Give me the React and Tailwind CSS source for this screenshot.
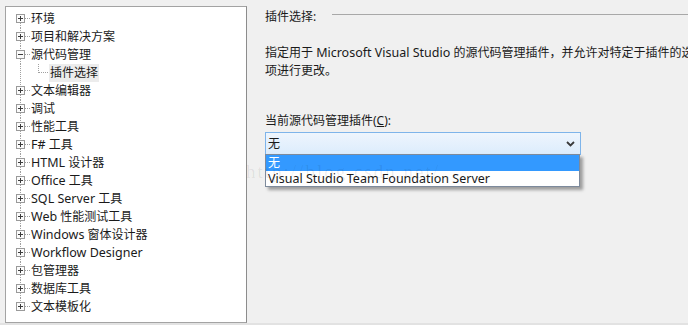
import React from "react";

const FONT = { fontFamily: '"Noto Sans", "Noto Sans CJK SC", sans-serif' };

function L({ children }) {
  return <span className="text-[12.5px]">{children}</span>;
}

function Connector({ kind, first, last, child }) {
  const dot = { stroke: "#a0a0a0", strokeDasharray: "1 1", strokeWidth: 1 };
  if (child) {
    return (
      <svg width="42" height="18" className="shrink-0" shapeRendering="crispEdges">
        <line x1="14.5" y1="0" x2="14.5" y2="18" style={dot} />
        <line x1="32.5" y1="0" x2="32.5" y2="9" style={dot} />
        <line x1="33" y1="8.5" x2="42" y2="8.5" style={dot} />
      </svg>
    );
  }
  return (
    <svg width="24" height="18" className="shrink-0" shapeRendering="crispEdges">
      {!first && <line x1="14.5" y1="0" x2="14.5" y2="4" style={dot} />}
      {!last && <line x1="14.5" y1="13" x2="14.5" y2="18" style={dot} />}
      <line x1="19" y1="8.5" x2="24" y2="8.5" style={dot} />
      <rect x="10.5" y="4.5" width="8" height="8" fill="#fbfbfb" stroke="#9a9a9a" />
      <line x1="12" y1="8.5" x2="17" y2="8.5" stroke="#3c3c3c" />
      {kind === "plus" && <line x1="14.5" y1="6" x2="14.5" y2="11" stroke="#3c3c3c" />}
    </svg>
  );
}

const items = [
  { t: "环境" },
  { t: "项目和解决方案" },
  { t: "源代码管理", open: true },
  { t: "插件选择", child: true },
  { t: "文本编辑器" },
  { t: "调试" },
  { t: "性能工具" },
  { t: <><L>F#</L> 工具</> },
  { t: <><L>HTML</L> 设计器</> },
  { t: <><L>Office</L> 工具</> },
  { t: <><L>SQL Server</L> 工具</> },
  { t: <><L>Web</L> 性能测试工具</> },
  { t: <><L>Windows</L> 窗体设计器</> },
  { t: <L>Workflow Designer</L> },
  { t: "包管理器" },
  { t: "数据库工具" },
  { t: "文本模板化" },
];

export default function App() {
  return (
    <div
      className="relative w-[688px] h-[325px] overflow-hidden bg-[#f0f0f0] text-[12px] text-[#1a1a1a] flex border-b-[2px] border-[#e2e2e2]"
      style={FONT}
    >
      {/* Tree panel */}
      <div className="ml-[5px] mt-[6px] w-[242px] h-[317px] shrink-0 bg-white border border-[#a3a3a3] border-r-[#8c8c8c] pt-[3px]">
        {items.map((it, i) => (
          <div key={i} className="flex items-center h-[18px] leading-[18px] whitespace-nowrap">
            {it.child ? (
              <>
                <Connector child />
                <span className="ml-[1px] px-[1px] bg-[#ececec] h-[18px]">{it.t}</span>
              </>
            ) : (
              <>
                <Connector
                  kind={it.open ? "minus" : "plus"}
                  first={i === 0}
                  last={i === items.length - 1}
                />
                <span className="ml-[1px]">{it.t}</span>
              </>
            )}
          </div>
        ))}
      </div>

      {/* Right panel */}
      <div className="ml-[18px] flex-1 flex flex-col min-w-0">
        <div className="flex items-start h-[18px] mt-[8px] leading-[18px]">
          <span className="whitespace-nowrap">插件选择:</span>
          <div className="flex-1 ml-[16px] mt-[6px] border-t border-[#a8a8a8]" />
        </div>
        <div className="mt-[18px] leading-[18px] whitespace-nowrap">
          <div>
            指定用于 <L>Microsoft Visual Studio</L> 的源代码管理插件，并允许对特定于插件的选
          </div>
          <div>项进行更改。</div>
        </div>
        <div className="mt-[32px] leading-[18px] whitespace-nowrap">
          当前源代码管理插件(<span className="underline">C</span>):
        </div>
        <div className="relative mt-[2px] w-[316px]">
          <div className="h-[23px] border border-[#7eb4ea] bg-gradient-to-b from-[#eef5fd] to-[#dcecfc] flex items-center justify-between pl-[2px] pr-[5px]">
            <span className="leading-[18px]">无</span>
            <svg width="9" height="6" viewBox="0 0 9 6">
              <polyline points="1,1 4.5,4.5 8,1" fill="none" stroke="#3a3a3a" strokeWidth="1.8" />
            </svg>
          </div>
          <div className="absolute left-0 top-[22px] w-[315px] bg-white border border-[#7d8a9c] shadow-[3px_3px_3px_rgba(0,0,0,0.35)]">
            <div className="h-[16px] leading-[16px] bg-[#3399ff] text-white pl-[2px]">无</div>
            <div className="h-[15px] leading-[15px] pl-[2px] whitespace-nowrap">
              <L>Visual Studio Team Foundation Server</L>
            </div>
          </div>
        </div>
      </div>

      {/* Watermark */}
      <div
        className="absolute left-[246px] top-[158px] text-[19px] tracking-[2px] text-[rgba(0,0,0,0.08)] whitespace-nowrap pointer-events-none"
        style={{ fontFamily: '"Liberation Serif", serif' }}
      >
        http://blog.csdn.net/
      </div>
    </div>
  );
}
